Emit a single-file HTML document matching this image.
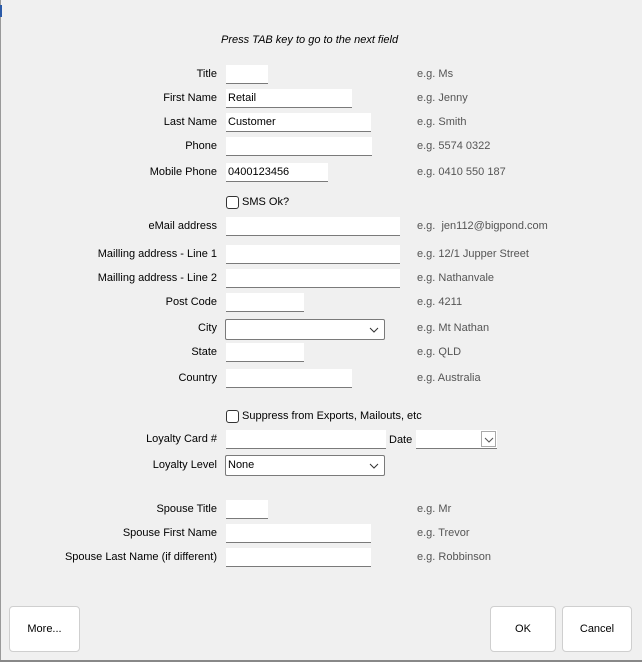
<!DOCTYPE html>
<html><head><meta charset="utf-8">
<style>
*{box-sizing:border-box;margin:0;padding:0}
body{width:642px;height:662px;background:#f0f0f0;font-family:"Liberation Sans",sans-serif;font-size:11px;color:#000;position:relative;overflow:hidden}
.l{position:absolute;right:425px;white-space:nowrap;line-height:14px}
.h{position:absolute;left:417px;color:#555;white-space:nowrap;line-height:14px}
.i{position:absolute;left:226px;height:19px;background:#fff;border-bottom:1px solid #7a7a7a;padding-left:2px;line-height:18px}
.c{position:absolute;left:225px;height:21px;width:160px;background:#fff;border:1px solid #7a7a7a;border-radius:2px;padding-left:2px;line-height:19px}
.c svg{position:absolute;right:5px;top:7px}
.cb{position:absolute;left:226px;width:13px;height:13px;border:1px solid #333;border-radius:3px;background:#fff}
.ct{position:absolute;left:242px;line-height:14px}
.b{position:absolute;top:606px;height:46px;background:#fff;border:1px solid #cfcfcf;border-radius:4px;text-align:center;line-height:44px}
</style></head><body>
<div style="position:absolute;left:0;top:0;width:1px;height:662px;background:#999"></div>
<div style="position:absolute;left:0;top:5px;width:2px;height:12px;background:#2a5aa8"></div>
<div style="position:absolute;left:221px;top:33px;font-style:italic;line-height:14px">Press TAB key to go to the next field</div>

<div class="l" style="top:67px">Title</div><div class="i" style="top:65px;width:42px"></div><div class="h" style="top:67px">e.g. Ms</div>
<div class="l" style="top:91px">First Name</div><div class="i" style="top:89px;width:126px">Retail</div><div class="h" style="top:91px">e.g. Jenny</div>
<div class="l" style="top:115px">Last Name</div><div class="i" style="top:113px;width:145px">Customer</div><div class="h" style="top:115px">e.g. Smith</div>
<div class="l" style="top:139px">Phone</div><div class="i" style="top:137px;width:146px"></div><div class="h" style="top:139px">e.g. 5574 0322</div>
<div class="l" style="top:165px">Mobile Phone</div><div class="i" style="top:163px;width:102px">0400123456</div><div class="h" style="top:165px">e.g. 0410 550 187</div>
<div class="cb" style="top:196px"></div><div class="ct" style="top:195px">SMS Ok?</div>
<div class="l" style="top:219px">eMail address</div><div class="i" style="top:217px;width:174px"></div><div class="h" style="top:219px">e.g.&nbsp; jen112@bigpond.com</div>
<div class="l" style="top:247px">Mailling address - Line 1</div><div class="i" style="top:245px;width:174px"></div><div class="h" style="top:247px">e.g. 12/1 Jupper Street</div>
<div class="l" style="top:271px">Mailling address - Line 2</div><div class="i" style="top:269px;width:174px"></div><div class="h" style="top:271px">e.g. Nathanvale</div>
<div class="l" style="top:295px">Post Code</div><div class="i" style="top:293px;width:78px"></div><div class="h" style="top:295px">e.g. 4211</div>
<div class="l" style="top:321px">City</div><div class="c" style="top:319px"><svg width="10" height="6"><path d="M1 1L5 5L9 1" fill="none" stroke="#333"/></svg></div><div class="h" style="top:321px">e.g. Mt Nathan</div>
<div class="l" style="top:345px">State</div><div class="i" style="top:343px;width:78px"></div><div class="h" style="top:345px">e.g. QLD</div>
<div class="l" style="top:371px">Country</div><div class="i" style="top:369px;width:126px"></div><div class="h" style="top:371px">e.g. Australia</div>
<div class="cb" style="top:410px"></div><div class="ct" style="top:409px">Suppress from Exports, Mailouts, etc</div>
<div class="l" style="top:432px">Loyalty Card #</div><div class="i" style="top:430px;width:160px"></div>
<div style="position:absolute;left:389px;top:433px;line-height:14px">Date</div>
<div class="i" style="top:430px;left:416px;width:81px"><div style="position:absolute;right:1px;top:1px;width:15px;height:16px;border:1px solid #aaa;background:#fff"><svg width="10" height="6" style="position:absolute;left:2px;top:5px"><path d="M1 1L5 5L9 1" fill="none" stroke="#555"/></svg></div></div>
<div class="l" style="top:458px">Loyalty Level</div><div class="c" style="top:455px">None<svg width="10" height="6"><path d="M1 1L5 5L9 1" fill="none" stroke="#333"/></svg></div>

<div class="l" style="top:502px">Spouse Title</div><div class="i" style="top:500px;width:42px"></div><div class="h" style="top:502px">e.g. Mr</div>
<div class="l" style="top:526px">Spouse First Name</div><div class="i" style="top:524px;width:145px"></div><div class="h" style="top:526px">e.g. Trevor</div>
<div class="l" style="top:550px">Spouse Last Name (if different)</div><div class="i" style="top:548px;width:145px"></div><div class="h" style="top:550px">e.g. Robbinson</div>

<div class="b" style="left:9px;width:71px">More...</div>
<div class="b" style="left:490px;width:66px">OK</div>
<div class="b" style="left:562px;width:70px">Cancel</div>
<div style="position:absolute;left:0;top:660px;width:642px;height:2px;background:#888"></div>
</body></html>
